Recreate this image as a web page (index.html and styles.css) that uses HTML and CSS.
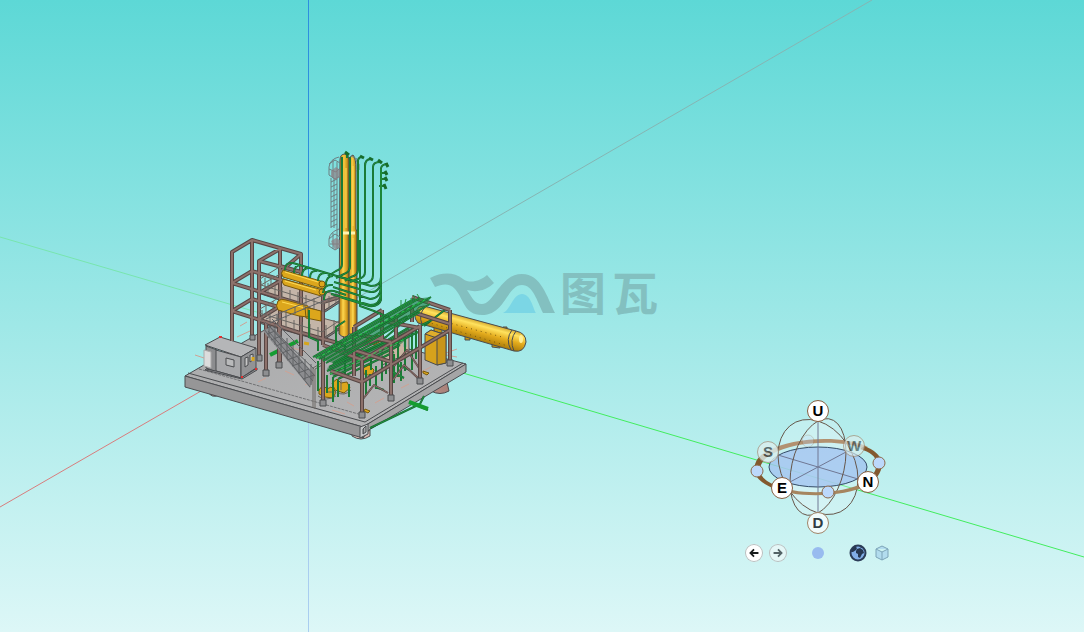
FILE: index.html
```html
<!DOCTYPE html>
<html lang="zh-CN">
<head>
<meta charset="utf-8">
<meta name="viewport" content="width=device-width, initial-scale=1">
<title>图瓦</title>
<link rel="stylesheet" href="styles.css">
</head>
<body>
<main class="viewer">
  <svg class="scene" viewBox="0 0 1084 632" preserveAspectRatio="xMidYMid slice" role="img" aria-label="Plant model">
    <defs>
      <linearGradient id="steelGold"><stop offset="0" stop-color="#8f6a12"/><stop offset=".2" stop-color="#dda526"/><stop offset=".5" stop-color="#f4c740"/><stop offset=".75" stop-color="#d79e20"/><stop offset="1" stop-color="#8b6510"/></linearGradient>
      <linearGradient id="tankGold" gradientUnits="userSpaceOnUse" x1="471" y1="316" x2="465" y2="338"><stop offset="0" stop-color="#b98713"/><stop offset=".3" stop-color="#ffe25e"/><stop offset=".6" stop-color="#e3ab1d"/><stop offset="1" stop-color="#a67809"/></linearGradient>
      <linearGradient id="pile"><stop offset="0" stop-color="#b88f88"/><stop offset=".5" stop-color="#f0d2ca"/><stop offset="1" stop-color="#a98179"/></linearGradient>
      <linearGradient id="deckGrey" x1="0" y1="0" x2="1" y2="1"><stop offset="0" stop-color="#a9aaab"/><stop offset="1" stop-color="#b6b6b7"/></linearGradient>
      <path id="rearSteel" d="M232 341V252L252 240V338M252 240L301 254V356M259 358V261L280 249V365M259 261L301 272M280 249V272L301 254M232 283L252 271L301 286M232 283L300 304M232 311L252 299L302 314M232 311L300 333M266 373V323M279 365V322M259 293L280 281M259 319L280 306M345 297V340M323 283V345M302 333L345 345M280 266L301 272M323 302L346 295"/>
      <path id="frontSteel" d="M323 403V357M362 415V360M391 398V342M420 381V325M450 363V310M362 382L450 330M412 297L450 310M412 312L450 324M382 310V341M354 327V376M354 327L382 310M323 345L362 360L420 326M388 322L420 328M391 342L362 335M340 354L382 337M388 322L412 307V322M354 350L391 362M331 371L362 382M396 316V338"/>
      <path id="braces" d="M393 380L404 365L419 379M394 366L407 350L419 368M363 399L374 385L388 393"/>
      <path id="towerPipes" d="M342 157V264Q342 269 336 271L328 276M350 157V266Q350 272 344 274L336 278M347 153V158M358 160V270Q358 275 351 277L345 281M365 166V272Q365 278 358 279L350 282M373 167V275Q373 282 366 283L358 283M381 168V277Q381 286 371 286L340 277M381 280Q380 293 370 292L334 282M381 287Q380 299 370 299L333 287M381 294Q380 305 370 305L331 294M381 169V300Q379 307 369 306L340 297M358 160Q359 157 362 157M365 166Q365 159 371 159M373 167Q373 162 380 162M381 168Q382 164 388 164M381 173H387M380 179H387M379 186H386M360 240V306L374 311L390 318"/>
      <path id="headers" d="M285 270Q285 262 293 263L357 282M294 273Q294 265 301 265M302 276Q302 268 309 268M310 278Q310 270 317 271M318 281Q318 273 325 273M326 285Q326 276 333 276M324 300Q324 289 334 291L346 295M323 293Q324 284 333 285"/>
      <path id="rackPipes" d="M313 357L414 299M316 358L420 298M319 359L425 300M323 361L431 297M326 363L430 304M333 363L420 312M318 354L410 301"/>
      <path id="rackPipes2" d="M327 371L390 341L430 321M330 374L394 344L418 332M333 377L400 345M329 367L384 342L411 326M338 379L394 352M333 364L386 337L408 318"/>
      <path id="dropPipes" d="M327 375V393M333 377V402M338 380V397M345 345V376M366 370V395M370 374V386M376 366V389M382 361V381M398 339V377M405 333V371M412 328V370M416 327V359M382 344V330L407 316M309 310V337L318 341V351M345 321L336 327V345M389 370L404 378M398 365L410 370M375 387L384 390M424 326L446 309M349 384V397M371 354V370M318 361V391M401 362V381M394 354V383M386 362V374"/>
    </defs>

    <g class="axes">
      <path class="axis-blue" d="M308.500 0V290"/>
      <path class="axis-blue-low" d="M308.500 400V632"/>
      <path class="axis-grey" d="M872 0L350 302"/>
      <path class="axis-green-far" d="M0 237L260 313"/>
      <path class="axis-green" d="M463 373L1084 557"/>
      <path class="axis-red" d="M0 507L208 387"/>
    </g>

    <!-- deck and piles -->
    <g class="ink">
      <path fill="url(#pile)" d="M434 380L431 391Q440 396 449 391L446 378ZM352 430V436Q361 442 370 436V430ZM207 391Q212 399 219 395V390Z"/>
      <path fill="url(#deckGrey)" d="M185 376L287 317L466 364L363 427Z"/>
      <path fill="#969697" d="M185 376L363 427V438L185 387Z"/>
      <path fill="#a5a5a6" d="M363 427L466 364V372L369 430L363 438Z"/>
      <path fill="none" d="M188 373L365 422L463 363"/>
      <path class="dashes" d="M199 369L362 415"/>
      <path fill="#c5c7c8" d="M360 427L368 424V434L360 438ZM363 429V434L366 432V426Z"/>
    </g>
    <path class="scratches" d="M195 355L204 358M237 337L250 331M240 326L247 322M290 347L306 352M258 382L266 378M285 371L294 375M305 385L313 380M332 410L345 414M347 402L354 406M375 403L384 398M396 376L404 380M421 372L431 367M446 353L457 349M446 355L457 357M401 388L409 384M347 376L357 379"/>
    <g class="green-outline"><path d="M370 428L420 404L424 396M409 402L428 410"/></g>
    <g class="green"><path d="M370 428L420 404L424 396"/><path class="wide" d="M409 402L428 409M270 355L298 341"/></g>

    <!-- cabin -->
    <g class="ink">
      <path fill="#b5b6b8" d="M205 345L220 337L256 348L241 357Z"/>
      <path fill="#8c8d8f" d="M206 346L217 350V372L206 368Z"/>
      <path fill="#a7a8aa" d="M216 350L241 357V378L216 371Z"/>
      <path fill="#929395" d="M241 357L256 348V368L241 378Z"/>
      <path class="pale" d="M204 350L211 352V368L204 366Z"/>
      <path fill="#b9babb" d="M226 358L234 360V367L226 365Z"/>
      <path fill="#c6c6c6" d="M245 358L248 357V365L245 367ZM250 355L253 354V360L250 362Z"/>
      <path fill="#8f9092" d="M206 369L216 371L241 378L257 368V370L242 379L205 370Z"/>
    </g>
    <path class="red-marks" d="M219 337H222M241 377H243M255 369H257"/>
    <path class="yellow-bit" d="M253 357V361M304 343L309 344"/>

    <!-- left frame, platforms and exchangers -->
    <g class="ink">
      <path class="floor" d="M261 292L280 279L345 297L322 312Z"/>
      <path class="floor" d="M259 321L280 307L345 324L322 339Z"/>
      <path fill="#877873" d="M261 292L322 312L345 297V299L322 314L261 294ZM259 321L322 339L345 324V326L322 341L259 323Z"/>
    </g>
    <use href="#rearSteel" class="steel-outline"/>
    <use href="#rearSteel" class="steel"/>
    <g class="ink gold-flat">
      <path d="M283 270L324 282Q328 286 323 289L283 277Q280 273 283 270ZM283 279L323 290Q326 294 321 296L284 285Q281 282 283 279Z"/>
      <path d="M278 301Q281 298 286 300L308 306V317L299 316L278 310Q275 306 278 301ZM305 307L321 311V321L306 318Z"/>
      <ellipse cx="322" cy="284" rx="3" ry="3"/><ellipse cx="322" cy="292" rx="3" ry="3"/>
    </g>
    <path class="tank-light" d="M285 272L318 282M285 281L316 290M282 302L305 308"/>
    <path class="rails" d="M261 285L323 304L346 289M261 281V292M268 283V294M275 285V296M282 287V298M290 290V301M298 292V304M306 295V306M314 298V309M323 300V312M329 296V308M336 291V303M342 287V299M259 313L322 332L345 317M262 310V321M270 312V323M278 315V326M286 317V328M294 320V331M302 322V334M310 324V336M318 327V339M326 325V337M334 320V332M341 315V327M261 285L280 274M260 279L281 266M265 278V289M271 275V286M260 309L280 297M266 305V315M273 301V311"/>
    <path class="stair-shade" d="M263 331L272 326L315 375L310 388Z"/>
    <path class="stair" d="M264 329L310 387M268 325L315 376M265 322L314 369M272 319L316 363M268 331L313 381M269 326V338M275 324V345M281 331V352M287 338V359M293 345V366M299 352V373M305 359V380M311 364V385M267 334L275 331M271 340L281 336M276 346L286 342M282 353L292 349M287 360L298 356M292 366L303 362M298 373L309 369M303 379L314 375M266 319L326 294M270 323L328 299M277 315V321M286 311V318M295 307V314M304 303V310"/>
    <path class="rails" d="M313 408V368L323 362M315 409V369L324 364"/>

    <!-- column -->
    <g class="ink">
      <path fill="url(#steelGold)" d="M348 165Q349 156 353 155Q356 158 356 170V229L357 232V334H348Z"/>
      <path fill="url(#steelGold)" d="M340 160Q340 154 345 154Q349 155 349 160V334Q345 340 339 334Z"/>
    </g>
    <path class="tank-light" d="M346 168V228M343 234V326M353 166V226M353 238V329"/>
    <path class="pale-band" d="M343 233H355"/>
    <path class="cage" d="M331 178V228M334 178V228M337 162V248M331 182L337 179M331 187L337 184M331 192L337 189M331 197L337 194M331 202L337 199M331 207L337 204M331 212L337 209M331 217L337 214M331 222L337 219M331 227L337 224M339 157Q330 159 329 167V175L335 179L340 176M329 164L335 160L340 163M329 169L336 172L340 168M333 160V178M339 229Q330 232 329 239V246L335 250L340 247M329 239L335 234L340 237M333 233V249M330 244H340M355 159L359 164V170L356 171M351 156L357 159V169"/>
    <path class="cage-fill" d="M331 171L336 167L340 170V177L335 180L331 176ZM331 241L336 238L340 240V247L335 250Z"/>

    <!-- horizontal tank -->
    <g class="ink">
      <path fill="#c7960d" d="M434 326V333H442V329M492 340V347L500 348V342M465 335V340H470V336M503 332V327H507V333"/>
      <path fill="url(#tankGold)" d="M419 307L424 306L516 331Q526 333 526 342Q524 353 514 351L418 323Q411 315 419 307Z"/>
      <path fill="none" d="M512 330Q505 339 511 350M516 331Q509 340 514 351M425 307Q418 315 422 324"/>
      <path fill="#d6a21c" d="M425 334L431 330L446 335V363L437 365L425 360Z"/>
      <path fill="#c8951a" d="M437 338L446 335V363L437 365Z"/>
      <path fill="#dfad2c" d="M425 334L431 330L446 335L437 338Z"/>
      <path fill="#c9b5a3" d="M382 343L409 329V353L382 365Z"/>
    </g>
    <path class="window-slit" d="M405 337V347"/>
    <ellipse class="tank-shine" cx="521" cy="339" rx="2" ry="4"/>
    <path class="bolts" d="M427 322L508 346M442 321L502 337"/>

    <!-- small pumps -->
    <g class="ink gold-flat">
      <path d="M319 390L323 385L327 389L331 387L336 392L333 398L325 397L319 394ZM332 383L337 379L341 383L347 382L350 388L344 393L335 390ZM363 368L369 365L374 370L372 376L364 374ZM368 338L378 335L381 341L374 345L366 342ZM423 371L429 373L427 375L423 373ZM365 409L370 411L368 413L364 411Z"/>
    </g>
    <path class="rails" d="M318 396Q326 402 336 396M337 392Q344 397 351 390M323 387V396M341 380V390M328 392H336"/>

    <use href="#dropPipes" class="green-outline"/>
    <use href="#dropPipes" class="green"/>
    <use href="#braces" class="steel-outline thin"/>
    <use href="#braces" class="steel thin"/>
    <path class="rack-shade" d="M327 368L384 342L411 326L416 331L394 350L334 377Z"/>
    <use href="#rackPipes2" class="green-outline"/>
    <use href="#rackPipes2" class="green"/>
    <use href="#frontSteel" class="steel-outline"/>
    <use href="#frontSteel" class="steel"/>
    <path class="rack-shade" d="M313 357L414 299L431 297L425 308L333 363Z"/>
    <use href="#rackPipes" class="green-outline"/>
    <use href="#rackPipes" class="green"/>
    <path class="green-mottle" d="M317 358L428 298M330 374L405 339"/>
    <path class="green" d="M401 300V308M406 299L404 307M411 298V305M413 295L416 301M417 294L421 300"/>
    <use href="#headers" class="green-outline"/>
    <use href="#headers" class="green"/>
    <use href="#towerPipes" class="green-outline"/>
    <use href="#towerPipes" class="green"/>
    <path class="nozzles" d="M345 152L349 155M360 156L364 158M369 158L373 160M378 160L382 163M386 163L388 167M385 171L387 175M385 177L387 181M384 184L386 189"/>
    <g class="ink" fill="#8e8f91">
      <path d="M250 335H255V340H250ZM257 355H262V361H257ZM263 370H269V376H263ZM276 362H282V368H276ZM320 400H326V406H320ZM359 412H365V418H359ZM388 395H394V401H388ZM417 378H423V384H417ZM447 360H453V366H447Z"/>
    </g>

    <!-- watermark -->
    <g class="watermark">
      <path class="swoosh" d="M430 278C442 272 454 272 463 279C470 284 480 281 487 275L494 283C487 290 477 293 467 290C473 299 475 304 482 304C494 304 500 274 522 274C541 274 547 297 555 313H543C537 301 533 285 522 285C507 285 505 315 482 315C464 315 464 299 455 289C449 283 443 284 435 287Z"/>
      <path class="peak" d="M503 313C511 309 513 294 522 294C531 294 533 309 536 313Z"/>
      <text x="560" y="310">图</text><text x="612" y="310">瓦</text>
    </g>
  </svg>

  <nav class="compass" aria-label="View orientation">
    <div class="globe">
      <svg class="globe-art" viewBox="0 0 160 148" aria-hidden="true">
        <g transform="translate(80 72)">
          <circle class="sphere" r="1" transform="matrix(40 12 0 46 0 0)"/>
          <circle class="sphere" r="1" transform="matrix(28 -15 0 46 0 0)"/>
          <path class="ring-back" d="M-50-16C-26-30 26-32 50-20L46-18C24-28-24-26-46-13Z"/>
          <ellipse class="disc" rx="49" ry="20"/>
          <path class="spokes" d="M0-46V46M-40-12L40 12M-28 15L28-15"/>
          <circle class="meridian" r="1" transform="matrix(40 12 0 46 0 0)"/>
          <circle class="meridian" r="1" transform="matrix(28 -15 0 46 0 0)"/>
          <path class="ring-front" d="M-43 18C-22 28 24 28 47 15L50 18C26 31-24 31-46 21Z"/>
          <path class="ring-side" d="M-64 3C-63 11-54 18-43 22L-40 19C-52 15-58 9-58 3ZM64-4C64 6 58 13 49 18L47 14C54 10 59 4 58-3ZM-64 3C-63-8-57-13-50-16L-46-13C-53-9-58-4-58 3ZM64-4C62-13 56-17 46-21L42-18C52-15 58-11 59-3Z"/>
          <circle class="ball ghost" cx="-10" cy="-26" r="6"/>
          <circle class="ball" cx="-61" cy="4" r="6"/>
          <circle class="ball" cx="61" cy="-4" r="6"/>
          <circle class="ball" cx="10" cy="25" r="6"/>
        </g>
      </svg>
      <button class="face up">U</button>
      <button class="face south faded">S</button>
      <button class="face west faint">W</button>
      <button class="face east">E</button>
      <button class="face north">N</button>
      <button class="face down soft">D</button>
    </div>
    <div class="tools">
      <div class="pair">
        <button class="tool round" aria-label="Previous view"><svg viewBox="0 0 18 18"><path d="M14 9H5M9 5L5 9L9 13"/></svg></button>
        <button class="tool round soft" aria-label="Next view"><svg viewBox="0 0 18 18"><path d="M4 9H13M9 5L13 9L9 13"/></svg></button>
      </div>
      <button class="tool" aria-label="Center"><svg viewBox="0 0 18 18"><circle class="dot" cx="9" cy="9" r="6"/></svg></button>
      <div class="pair">
        <button class="tool" aria-label="Globe"><svg viewBox="0 0 18 18"><circle class="earth" cx="9" cy="9" r="7.500"/><path class="land" d="M3 5L6 2L8 4L7 6L4 8L2 8ZM8 5L11 4L14 6L15 9L13 10L11 14L9 13L9 10L7 9L7 7ZM10 2L14 4L12 4Z"/></svg></button>
        <button class="tool" aria-label="Cube"><svg viewBox="0 0 18 18"><path class="cube" d="M9 2L15 5V13L9 16L3 13V5ZM3 5L9 8L15 5M9 8V16"/></svg></button>
      </div>
    </div>
  </nav>
</main>
</body>
</html>
```
FILE: styles.css
```css
* { box-sizing: border-box; }
body { margin: 0; font-family: "Liberation Sans", Arial, sans-serif; }
.viewer {
  position: relative;
  height: 100vh;
  overflow: hidden;
  background: linear-gradient(#5dd8d6, #ddf7f7);
}
.scene { display: block; width: 100%; height: 100%; }
.scene path { stroke-linejoin: round; }

.axes path { fill: none; stroke-width: 1; }
.axes .axis-blue { stroke: #2e8ee0; }
.axes .axis-blue-low { stroke: #a9cdf0; }
.axes .axis-grey { stroke: #86b5b3; }
.axes .axis-green-far { stroke: #78e5ae; }
.axes .axis-green { stroke: #42ed5e; }
.axes .axis-red { stroke: #d87d7d; }

.ink { stroke: #4a4c4f; stroke-width: 1; }
.ink .dashes { fill: none; stroke: #707173; stroke-dasharray: 3 1; }
.ink .pale { fill: #dcdcdc; stroke: #aaa; }
.ink .floor { fill: #c4b5a8; stroke: #665c57; }
.scratches { fill: none; stroke: #cfa294; }
.red-marks { stroke: #e03030; stroke-width: 2; }
.yellow-bit { stroke: #d6a51b; stroke-width: 3; }

.steel-outline, .steel, .green-outline, .green, .rails, .stair, .cage, .nozzles, .green-mottle { fill: none; }
.steel-outline { stroke: #574644; stroke-width: 4; }
.steel-outline.thin { stroke-width: 2; }
.steel { stroke: #8d716b; stroke-width: 2; }
.steel.thin { stroke-width: 1; }
.green-outline { stroke: #176231; stroke-width: 2; }
.green { stroke: #20933d; stroke-width: 1; }
.green .wide { stroke: #159c31; stroke-width: 4; }
.green-mottle { stroke: #24ce4b; stroke-width: 1; stroke-dasharray: 3 3; }
.rack-shade { fill: #1c7c3c; fill-opacity: .6; }
.nozzles { stroke: #176d2b; stroke-width: 3; }
.rails { stroke: #6a6762; stroke-width: 1; }
.stair-shade { fill: #8b8c8f; }
.stair { stroke: #606265; stroke-width: 1; }
.cage { stroke: #6d8083; stroke-width: 1; }
.cage-fill { fill: #8e7f83; opacity: .7; }

.gold-flat { fill: #dca61c; stroke: #78590d; }
.tank-light { fill: none; stroke: #ffdc55; stroke-width: 1; }
.pale-band { stroke: #fff3b0; stroke-width: 3; }
.tank-shine { fill: #ffef96; }
.bolts { fill: none; stroke: #76570d; stroke-dasharray: 1 4; }
.window-slit { stroke: #74b8bd; stroke-width: 3; }

.watermark { fill: #83c0c0; }
.watermark .peak { fill: #7bd6e5; }
.watermark text { font: 700 46px "Noto Sans CJK SC", sans-serif; }

.compass {
  position: absolute;
  right: 186px;
  bottom: 70px;
  width: 160px;
}
.globe { position: relative; }
.globe-art { display: block; width: 100%; }
.sphere { fill: #e5f5fa; fill-opacity: .3; }
.meridian { fill: none; stroke: #66564a; stroke-width: 1; vector-effect: non-scaling-stroke; }
.disc { fill: #a2c4f0; fill-opacity: .8; stroke: #344c66; }
.spokes { fill: none; stroke: #707894; }
.ring-back { fill: #b29170; }
.ring-front { fill: #a6855f; }
.ring-side { fill: #83592f; }
.ball { fill: #bcd8fb; stroke: #8d694b; }
.ghost { opacity: .25; }

.face {
  position: absolute;
  width: 22px;
  height: 22px;
  padding: 0;
  border: 1px solid #875f41;
  border-radius: 50%;
  background: #fff;
  color: #000;
  font: 700 15px/20px "Liberation Sans", Arial, sans-serif;
  text-align: center;
}
.up { left: 69px; top: 5px; }
.south { left: 19px; top: 46px; }
.west { left: 105px; top: 40px; }
.east { left: 33px; top: 82px; }
.north { left: 119px; top: 76px; }
.down { left: 69px; top: 117px; }
.face.soft { background: #f0fbfb; border-color: #a08468; color: #303c43; }
.face.faded { background: #dceeee; border-color: #a99683; color: #404a4c; opacity: .8; }
.face.faint { background: #dceeee; border-color: #a08468; color: #3a4a4c; opacity: .65; }

.tools { display: flex; justify-content: center; gap: 22px; padding-top: 1px; }
.pair { display: flex; gap: 6px; }
.tool { width: 18px; height: 18px; padding: 1px; border: 0; background: none; }
.tool svg { display: block; fill: none; stroke: #171b1c; stroke-width: 2; }
.tool.round { border-radius: 50%; background: #fff; box-shadow: inset 0 0 0 1px #b7c0c0; }
.tool.round.soft { background: #e5f7f7; }
.tool.soft svg { stroke: #526265; }
.tool:not(.round) { padding: 0; }
.tool .dot { fill: #98bbef; stroke: none; }
.tool .earth { fill: #82aee8; stroke: #2c3d58; }
.tool .land { fill: #273852; stroke: none; }
.tool .cube { fill: #b2dcee; stroke: #7ca4b8; stroke-width: 1; }
```
